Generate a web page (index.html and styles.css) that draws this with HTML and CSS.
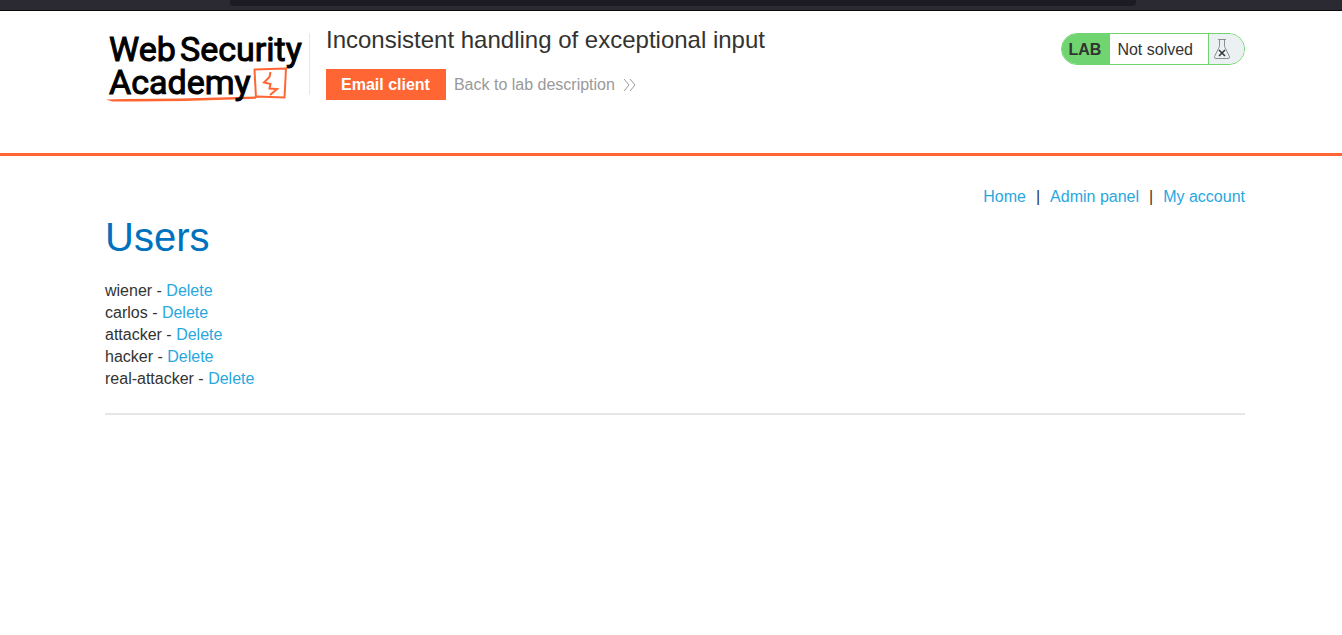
FILE: index.html
```html
<!DOCTYPE html>
<html lang="en">
<head>
<meta charset="utf-8">
<title>Inconsistent handling of exceptional input</title>
<link rel="stylesheet" href="styles.css">
</head>
<body>
<div class="browser-edge"><div class="address-bar"></div></div>
<header class="lab-header">
  <div class="container header-row">
    <a class="logo" href="#" aria-label="Web Security Academy">
      <svg width="204" height="84" viewBox="0 0 204 84">
        <path class="logo-under" d="M1 79.500L20 79L75 78.600L151 76.600L151 78.700L80 81L30 81.500L7 81.500Z"/>
        <g class="logo-text">
          <text x="4" y="41">Web</text>
          <text x="75" y="41">Security</text>
          <text x="4" y="74">Academy</text>
        </g>
        <path class="logo-box" d="M151 78L149.500 49.500L181 48.500L179.500 77.500L152 76.500"/>
        <path class="logo-bolt" d="M165.500 52L164.500 57L159 62.500L165.500 64L164.500 68.500L172 69L165 75"/>
      </svg>
    </a>
    <div class="title-block">
      <h2 class="title">Inconsistent handling of exceptional input</h2>
      <div class="actions">
        <a class="email-button" href="#">Email client</a>
        <a class="back-link" href="#">Back to lab description
          <svg width="13" height="14" viewBox="0 0 13 14"><path d="M1 1L6 7L1 13M7 1L12 7L7 13"/></svg>
        </a>
      </div>
    </div>
    <div class="lab-status">
      <span class="lab-tag">LAB</span>
      <span class="lab-text">Not solved</span>
      <span class="lab-flask">
        <svg width="18" height="22" viewBox="0 0 18 22">
          <path class="flask" d="M5 1.500H13M6.500 2V8.500L1.500 18.500Q1 20.500 3 20.500H15Q17 20.500 16.500 18.500L11.500 8.500V2"/>
          <path class="cross" d="M6 12L12 18M12 12L6 18"/>
        </svg>
      </span>
    </div>
  </div>
</header>
<main class="container">
  <nav class="top-links">
    <a href="#">Home</a><span>|</span><a href="#">Admin panel</a><span>|</span><a href="#">My account</a>
  </nav>
  <h1 class="heading">Users</h1>
  <div class="users">
    <div>wiener - <a href="#">Delete</a></div>
    <div>carlos - <a href="#">Delete</a></div>
    <div>attacker - <a href="#">Delete</a></div>
    <div>hacker - <a href="#">Delete</a></div>
    <div>real-attacker - <a href="#">Delete</a></div>
  </div>
  <hr class="divider">
</main>
</body>
</html>
```
FILE: styles.css
```css
* { box-sizing: border-box; }
body {
  margin: 0;
  background: #fff;
  color: #333332;
  font: 16px/22px "Liberation Sans", Arial, sans-serif;
}
a { color: #29a7df; text-decoration: none; }
.browser-edge {
  height: 11px;
  background: #2b2a33;
  border-bottom: 1px solid #08070c;
  padding: 0 206px 0 230px;
}
.address-bar { height: 6px; background: #1c1b22; border-radius: 0 0 4px 4px; }
.lab-header { padding-left: 8px; border-bottom: 3px solid #ff6633; }
.container { max-width: 1140px; margin: 0 auto; }
.header-row { display: flex; align-items: flex-start; min-height: 142px; padding-top: 11px; }
.logo { flex: none; width: 205px; height: 62px; margin-top: 11px; border-right: 1px solid #e6e6e6; }
.logo svg { display: block; margin-top: -13px; overflow: visible; }
.logo-text {
  font-family: Roboto, sans-serif;
  font-size: 34px;
  stroke: #000;
  stroke-width: 1px;
}
.logo-under { fill: #ff6633; }
.logo-box { fill: none; stroke: #ff6633; stroke-width: 2px; stroke-linejoin: round; }
.logo-bolt { fill: none; stroke: #ff6633; stroke-width: 2px; }
.title-block { flex: 1; padding: 4px 0 0 16px; }
.title { margin: 0; font-size: 24px; line-height: 28px; font-weight: 400; }
.actions { display: flex; align-items: center; gap: 8px; margin-top: 15px; }
.email-button { padding: 0 16px 0 15px; background: #ff6633; color: #fff; font-weight: 700; line-height: 31px; }
.back-link { display: flex; align-items: center; gap: 8px; color: #999; }
.back-link svg { fill: none; stroke: #999; }
.lab-status {
  display: flex;
  height: 32px;
  margin-top: 11px;
  border: 1px solid #70d470;
  border-radius: 16px;
  overflow: hidden;
  line-height: 32px;
}
.lab-tag { padding: 0 9px 0 7px; background: #70d470; font-weight: 700; }
.lab-text { padding: 0 15px 0 7px; }
.lab-flask { width: 36px; padding: 4px; background: #ebf0f2; border-left: 1px solid #70d470; }
.lab-flask svg { display: block; fill: none; }
.flask { stroke: #8c8f91; }
.cross { stroke: #333332; stroke-width: 1.500; }
main.container { width: 100%; max-width: 1148px; padding-left: 8px; }
.top-links { display: flex; justify-content: flex-end; gap: 10px; padding-top: 30px; }
.heading { margin: 5px 0 0; color: #0071bc; font-size: 40px; line-height: 48px; font-weight: 400; }
.users { margin-top: 19px; }
.divider { margin: 23px 0 0; border: 0; border-top: 2px solid #e6e6e6; }
```
